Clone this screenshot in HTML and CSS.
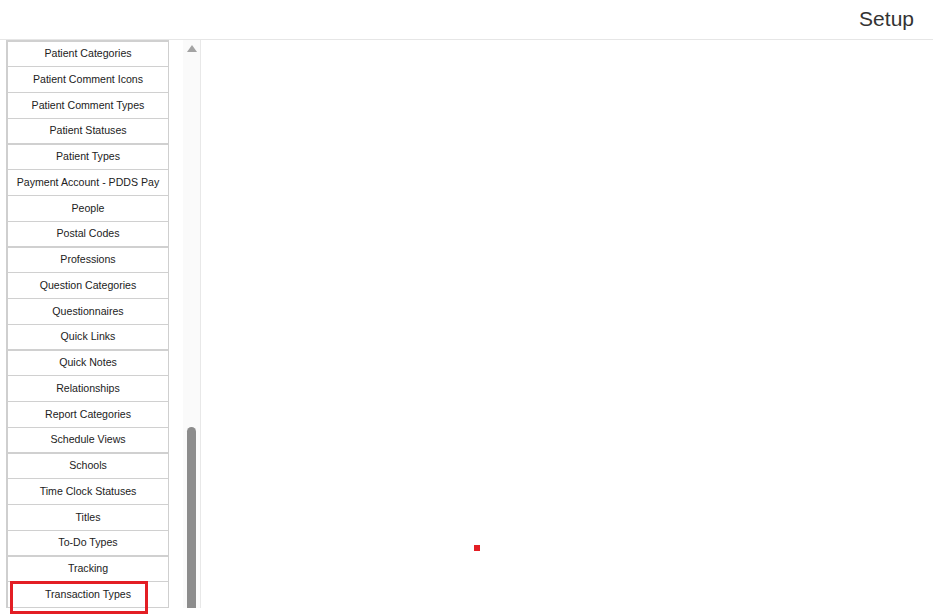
FILE: index.html
```html
<!DOCTYPE html>
<html lang="en">
<head>
  <meta charset="UTF-8" />
  <meta name="viewport" content="width=device-width, initial-scale=1.0" />
  <title>Setup</title>
  <link rel="stylesheet" href="styles.css">
</head>
<body>
  <header class="top-bar">
    <h1>Setup</h1>
  </header>

  <div class="layout">
    <aside class="sidebar">
      <div class="menu-scroll">
        <ul class="menu">
          <li>Patient Categories</li>
          <li>Patient Comment Icons</li>
          <li>Patient Comment Types</li>
          <li>Patient Statuses</li>
          <li>Patient Types</li>
          <li>Payment Account - PDDS Pay</li>
          <li>People</li>
          <li>Postal Codes</li>
          <li>Professions</li>
          <li>Question Categories</li>
          <li>Questionnaires</li>
          <li>Quick Links</li>
          <li>Quick Notes</li>
          <li>Relationships</li>
          <li>Report Categories</li>
          <li>Schedule Views</li>
          <li>Schools</li>
          <li>Time Clock Statuses</li>
          <li>Titles</li>
          <li>To-Do Types</li>
          <li>Tracking</li>
          <li>Transaction Types</li>
          <li></li>
        </ul>
      </div>

      <!-- fake scrollbar, the list is scrolled down -->
      <div class="scrollbar">
        <span class="scroll-arrow"></span>
        <span class="scroll-thumb"></span>
      </div>

      <div class="highlight"></div>
    </aside>

    <main class="content">
      <span class="marker"></span>
    </main>
  </div>
</body>
</html>
```

FILE: styles.css
```css
html, body {
  height: 100%;
}
body {
  margin: 0;
  font-family: 'Liberation Sans', Arial, sans-serif;
  color: #333;
  background: #fff;
}
.top-bar {
  height: 39px;
  border-bottom: 1px solid #e6e6e6;
  display: flex;
  justify-content: flex-end;
  align-items: center;
  padding-right: 19px;
}
.top-bar h1 {
  margin: 0 0 2px;
  font-size: 21px;
  font-weight: normal;
  color: #333;
}
.layout {
  display: flex;
  align-items: flex-start;
  height: 576px;
}
.sidebar {
  position: relative;
  box-sizing: border-box;
  width: 201px;
  height: 568px;
  padding-left: 6px;
  border-right: 1px solid #e8e8e8;
  display: flex;
  gap: 14px;
}
.menu-scroll {
  width: 163px;
  overflow: hidden;
}
.menu {
  list-style: none;
  margin: 0;
  padding: 0;
  border-top: 2px solid #d0d0d0;
  border-left: 2px solid #cfcfcf;
  border-right: 1px solid #cfcfcf;
}
.menu li {
  box-sizing: border-box;
  height: 24px;
  padding-bottom: 2px;
  border-bottom: 1px solid #d0d0d0;
  display: flex;
  align-items: center;
  justify-content: center;
  font-size: 10.6px;
  color: #222;
  white-space: nowrap;
}
.menu li:nth-child(4n+2),
.menu li:nth-child(4n+3) {
  height: 26px;
}
.menu li:nth-child(4n+1) {
  height: 25px;
}
.menu li:nth-child(4n) {
  height: 26px;
  border-bottom-width: 2px;
}
.scrollbar {
  width: 17px;
  background: #fafafa;
  display: flex;
  flex-direction: column;
  align-items: center;
}
.scroll-arrow {
  margin-top: 5px;
  width: 0;
  height: 0;
  border-left: 5px solid transparent;
  border-right: 5px solid transparent;
  border-bottom: 7px solid #a3a3a3;
}
.scroll-thumb {
  margin-top: auto;
  width: 9px;
  height: 181px;
  background: #8c8c8c;
  border-radius: 5px 5px 0 0;
}
.highlight {
  position: absolute;
  left: 10px;
  top: 541px;
  width: 138px;
  height: 33px;
  box-sizing: border-box;
  border: 3px solid #e31e24;
}
.content {
  position: relative;
  flex: 1;
  align-self: stretch;
}
.marker {
  position: absolute;
  left: 273px;
  top: 505px;
  width: 6px;
  height: 6px;
  background: #e31e24;
}
```
